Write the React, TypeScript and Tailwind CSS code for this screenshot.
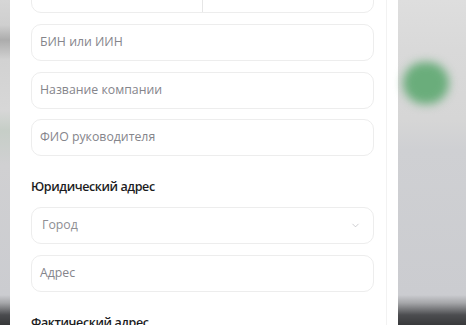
import { ChevronDown } from "lucide-react";

function Field({ label }: { label: string }) {
  return (
    <div className="h-[37px] rounded-[10px] border border-[#ededed] bg-white flex items-center px-2 text-[12.3px] text-[#85858b]">
      {label}
    </div>
  );
}

export default function App() {
  return (
    <div className="w-[466px] h-[325px] overflow-hidden flex font-['Open_Sans',sans-serif]">
      {/* blurred page behind, left side */}
      <div className="w-[10px] shrink-0 bg-[linear-gradient(to_bottom,#d6d6d6_0px,#cfcfcf_25px,#acacac_40px,#d2d2d2_60px,#d7d7d7_110px,#c6cec7_130px,#d0d0d2_165px,#cbccd0_295px,#a5a6a9_303px,#4a4b4e_315px,#363739_325px)]" />

      {/* modal */}
      <div className="w-[388px] shrink-0 bg-white flex">
        <div className="flex-1 pl-[21px] pr-[12px] flex flex-col">
          {/* split field cut off at top */}
          <div className="mt-[-24px] h-[37px] rounded-[10px] border border-[#ededed] flex shrink-0">
            <div className="flex-1 border-r border-[#e6e6e6]" />
            <div className="flex-1" />
          </div>

          <div className="mt-[11px] flex flex-col gap-[10.5px]">
            <Field label="БИН или ИИН" />
            <Field label="Название компании" />
            <Field label="ФИО руководителя" />
          </div>

          <div className="mt-[22px] text-[12.5px] font-semibold tracking-[-0.4px] text-[#1c1c1e] leading-[18px]">
            Юридический адрес
          </div>

          <div className="mt-[11px] flex flex-col gap-[11px]">
            <div className="h-[37px] rounded-[10px] border border-[#ededed] bg-white flex items-center justify-between pl-[10px] pr-[12px] text-[12.3px] text-[#8e8e93]">
              <span>Город</span>
              <ChevronDown size={11} strokeWidth={1.5} className="text-[#b8b8bc]" />
            </div>
            <Field label="Адрес" />
          </div>

          <div className="mt-[22px] text-[12.5px] font-semibold tracking-[-0.4px] text-[#1c1c1e] leading-[18px]">
            Фактический адрес
          </div>
        </div>
        <div className="w-[12px] border-l border-[#f2f2f2]" />
      </div>

      {/* blurred page behind, right side */}
      <div className="flex-1 relative bg-[linear-gradient(to_bottom,#dedede_0px,#d9d9d9_50px,#d6d6d6_120px,#cfd0d3_150px,#cbccd0_295px,#a5a6a9_303px,#4c4d50_315px,#38393b_325px)]">
        <div className="absolute left-[5px] top-[62px] w-[46px] h-[42px] rounded-full bg-[#6aad7b] blur-[5px]" />
      </div>
    </div>
  );
}
